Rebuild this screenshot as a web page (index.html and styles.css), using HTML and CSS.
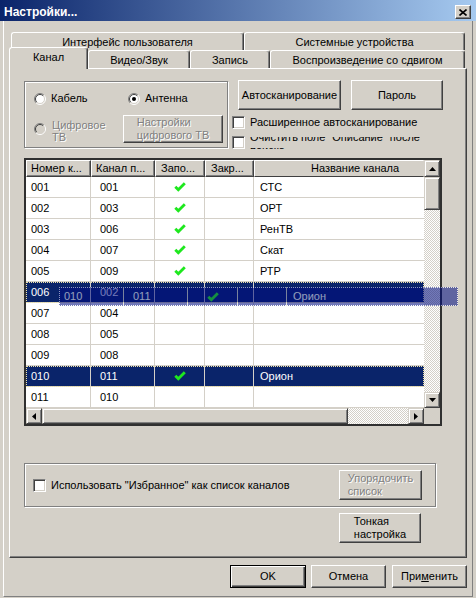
FILE: index.html
```html
<!DOCTYPE html>
<html lang="ru">
<head>
<meta charset="utf-8">
<title>Настройки...</title>
<link rel="stylesheet" href="styles.css">
</head>
<body>
<div class="window">
  <div class="titlebar">
    <span class="title">Настройки...</span>
    <span class="close"><svg width="8" height="7" viewBox="0 0 8 7"><path d="M0.5 0.5L7.5 6.5M7.5 0.5L0.5 6.5" stroke="#000" stroke-width="1.6" fill="none"/></svg></span>
  </div>
  <div class="client">
    <div class="tabrow back">
      <div class="tab w-ui">Интерфейс пользователя</div>
      <div class="tab w-sys">Системные устройства</div>
    </div>
    <div class="tabrow front">
      <div class="tab sel w-ch">Канал</div>
      <div class="tab w-av">Видео/Звук</div>
      <div class="tab w-rec">Запись</div>
      <div class="tab w-ts">Воспроизведение со сдвигом</div>
    </div>
    <div class="panel">
      <div class="top">
        <div class="grp1">
          <div class="rrow">
            <div class="radio r-first">
              <svg class="rc" width="12" height="12" viewBox="0 0 12 12"><circle cx="6" cy="6" r="5" fill="#fff"/><path d="M2.1 9.9A5.5 5.5 0 0 1 9.9 2.1" stroke="#808080" fill="none"/><path d="M9.9 2.1A5.5 5.5 0 0 1 2.1 9.9" stroke="#fff" fill="none"/><path d="M2.8 9.2A4.5 4.5 0 0 1 9.2 2.8" stroke="#404040" fill="none"/><path d="M9.2 2.8A4.5 4.5 0 0 1 2.8 9.2" stroke="#d4d0c8" fill="none"/></svg>
              <span class="rl">Кабель</span>
            </div>
            <div class="radio">
              <svg class="rc" width="12" height="12" viewBox="0 0 12 12"><circle cx="6" cy="6" r="5" fill="#fff"/><path d="M2.1 9.9A5.5 5.5 0 0 1 9.9 2.1" stroke="#808080" fill="none"/><path d="M9.9 2.1A5.5 5.5 0 0 1 2.1 9.9" stroke="#fff" fill="none"/><path d="M2.8 9.2A4.5 4.5 0 0 1 9.2 2.8" stroke="#404040" fill="none"/><path d="M9.2 2.8A4.5 4.5 0 0 1 2.8 9.2" stroke="#d4d0c8" fill="none"/><circle cx="6" cy="6" r="2" fill="#000"/></svg>
              <span class="rl">Антенна</span>
            </div>
          </div>
          <div class="rrow2">
            <div class="radio r-dig">
              <svg class="rc" width="12" height="12" viewBox="0 0 12 12"><circle cx="6" cy="6" r="5" fill="#d4d0c8"/><path d="M2.1 9.9A5.5 5.5 0 0 1 9.9 2.1" stroke="#808080" fill="none"/><path d="M9.9 2.1A5.5 5.5 0 0 1 2.1 9.9" stroke="#fff" fill="none"/><path d="M2.8 9.2A4.5 4.5 0 0 1 9.2 2.8" stroke="#404040" fill="none"/><path d="M9.2 2.8A4.5 4.5 0 0 1 2.8 9.2" stroke="#d4d0c8" fill="none"/></svg>
              <span class="rl dis two">Цифровое<br>ТВ</span>
            </div>
            <div class="btn b-dtv"><span class="ml dis">Настройки<br>цифрового ТВ</span></div>
          </div>
        </div>
        <div class="rcol">
          <div class="btnrow">
            <div class="btn b-auto">Автосканирование</div>
            <div class="btn b-pass">Пароль</div>
          </div>
          <div class="chkrow c1">
            <span class="chk"></span>
            <span class="cl">Расширенное автосканирование</span>
          </div>
          <div class="chkrow c2">
            <span class="chk"></span>
            <span class="cl clip"><span class="clipin">Очистить поле "Описание" после поиска</span></span>
          </div>
        </div>
      </div>

      <div class="lv">
        <div class="lv-main">
          <div class="hdr">
            <div class="hc k1">Номер к...</div>
            <div class="hc k2">Канал п...</div>
            <div class="hc k3">Запо...</div>
            <div class="hc k4">Закр...</div>
            <div class="hc k5">Название канала</div>
          </div>
          <div class="row"><div class="cell k1">001</div><div class="cell k2">001</div><div class="cell k3"><svg class="ok" width="12" height="10" viewBox="0 0 12 10"><path d="M1.3 4.8L4.3 7.8L10.8 1.3" stroke="#1ee81e" stroke-width="2.8" fill="none"/></svg></div><div class="cell k4"></div><div class="cell k5">СТС</div></div>
          <div class="row"><div class="cell k1">002</div><div class="cell k2">003</div><div class="cell k3"><svg class="ok" width="12" height="10" viewBox="0 0 12 10"><path d="M1.3 4.8L4.3 7.8L10.8 1.3" stroke="#1ee81e" stroke-width="2.8" fill="none"/></svg></div><div class="cell k4"></div><div class="cell k5">ОРТ</div></div>
          <div class="row"><div class="cell k1">003</div><div class="cell k2">006</div><div class="cell k3"><svg class="ok" width="12" height="10" viewBox="0 0 12 10"><path d="M1.3 4.8L4.3 7.8L10.8 1.3" stroke="#1ee81e" stroke-width="2.8" fill="none"/></svg></div><div class="cell k4"></div><div class="cell k5">РенТВ</div></div>
          <div class="row"><div class="cell k1">004</div><div class="cell k2">007</div><div class="cell k3"><svg class="ok" width="12" height="10" viewBox="0 0 12 10"><path d="M1.3 4.8L4.3 7.8L10.8 1.3" stroke="#1ee81e" stroke-width="2.8" fill="none"/></svg></div><div class="cell k4"></div><div class="cell k5">Скат</div></div>
          <div class="row"><div class="cell k1">005</div><div class="cell k2">009</div><div class="cell k3"><svg class="ok" width="12" height="10" viewBox="0 0 12 10"><path d="M1.3 4.8L4.3 7.8L10.8 1.3" stroke="#1ee81e" stroke-width="2.8" fill="none"/></svg></div><div class="cell k4"></div><div class="cell k5">РТР</div></div>
          <div class="row sel focus"><div class="cell k1">006</div><div class="cell k2">002</div><div class="cell k3"></div><div class="cell k4"></div><div class="cell k5"></div></div>
          <div class="row"><div class="cell k1">007</div><div class="cell k2">004</div><div class="cell k3"></div><div class="cell k4"></div><div class="cell k5"></div></div>
          <div class="row"><div class="cell k1">008</div><div class="cell k2">005</div><div class="cell k3"></div><div class="cell k4"></div><div class="cell k5"></div></div>
          <div class="row"><div class="cell k1">009</div><div class="cell k2">008</div><div class="cell k3"></div><div class="cell k4"></div><div class="cell k5"></div></div>
          <div class="row sel focus"><div class="cell k1">010</div><div class="cell k2">011</div><div class="cell k3"><svg class="ok" width="12" height="10" viewBox="0 0 12 10"><path d="M1.3 4.8L4.3 7.8L10.8 1.3" stroke="#1ee81e" stroke-width="2.8" fill="none"/></svg></div><div class="cell k4"></div><div class="cell k5">Орион</div></div>
          <div class="row"><div class="cell k1">011</div><div class="cell k2">010</div><div class="cell k3"></div><div class="cell k4"></div><div class="cell k5"></div></div>
        </div>
        <div class="vs">
          <div class="sb sb-up"><svg width="7" height="4" viewBox="0 0 7 4"><path d="M3.5 0L7 4H0Z" fill="#000"/></svg></div>
          <div class="sb thumb-v"></div>
          <div class="track"></div>
          <div class="sb"><svg width="7" height="4" viewBox="0 0 7 4"><path d="M0 0H7L3.5 4Z" fill="#000"/></svg></div>
        </div>
        <div class="hs">
          <div class="sb"><svg width="4" height="7" viewBox="0 0 4 7"><path d="M4 0V7L0 3.5Z" fill="#000"/></svg></div>
          <div class="sb thumb-h"></div>
          <div class="track"></div>
          <div class="sb"><svg width="4" height="7" viewBox="0 0 4 7"><path d="M0 0L4 3.5L0 7Z" fill="#000"/></svg></div>
        </div>
        <div class="corner"></div>

        <div class="drag">
          <div class="cell k1">010</div><div class="cell k2">011</div><div class="cell k3"><svg class="ok" width="12" height="10" viewBox="0 0 12 10"><path d="M1.3 4.8L4.3 7.8L10.8 1.3" stroke="#1ee81e" stroke-width="2.8" fill="none"/></svg></div><div class="cell k4"></div><div class="cell k5 dk5">Орион</div>
        </div>
      </div>

      <div class="grp2">
        <span class="chk"></span>
        <span class="cl">Использовать "Избранное" как список каналов</span>
        <div class="btn b-sort"><span class="ml dis">Упорядочить<br>список</span></div>
      </div>
      <div class="btn b-fine"><span class="ml">Тонкая<br>настройка</span></div>
    </div>

    <div class="bottom">
      <div class="btn b-ok">OK</div>
      <div class="btn b-cancel">Отмена</div>
      <div class="btn b-apply">При<u>м</u>енить</div>
    </div>
  </div>
</div>
</body>
</html>
```

FILE: styles.css
```css
* { box-sizing: border-box; }
html, body { margin: 0; padding: 0; }
body {
  width: 476px; height: 598px; overflow: hidden;
  background: #d4d0c8;
  font-family: "Liberation Sans", Arial, sans-serif;
  font-size: 11px; color: #000;
}
.window { width: 476px; height: 598px; background: #d4d0c8; display: flex; flex-direction: column; }

.titlebar {
  height: 21px; flex: none;
  background: linear-gradient(to right, #0a246a, #a6caf0);
  display: flex; align-items: center;
  padding: 3px 5px 0 4px;
}
.title { color: #fff; font-weight: bold; font-size: 12px; flex: 1; }
.close {
  width: 16px; height: 14px; background: #d4d0c8;
  border: 1px solid; border-color: #fff #404040 #404040 #fff;
  box-shadow: inset -1px -1px #808080;
  display: flex; align-items: center; justify-content: center;
}
.close svg { display: block; }

.client {
  flex: none; margin-left: 3px; width: 470px; height: 576px;
  border-left: 1px solid #fff; border-right: 1px solid #808080; border-bottom: 1px solid #808080;
  padding-top: 11px;
}

.tabrow { display: flex; align-items: flex-end; }
.tabrow.back { margin-left: 7px; height: 18px; }
.tabrow.front { margin-left: 5px; margin-top: -3px; height: 21px; position: relative; z-index: 1; }
.tab {
  height: 18px; background: #d4d0c8;
  border-top: 1px solid #fff; border-left: 1px solid #fff; border-right: 1px solid #404040;
  box-shadow: inset -1px 0 #808080;
  border-radius: 3px 3px 0 0;
  text-align: center; line-height: 16px; padding-top: 1px; white-space: nowrap;
}
.tab.sel { height: 22px; margin-bottom: -1px; }
.w-ui { width: 233px; }
.w-sys { width: 221px; }
.w-ch { width: 79px; }
.w-av { width: 102px; }
.w-rec { width: 80px; }
.w-ts { width: 195px; }

.panel {
  margin-left: 5px; width: 458px; height: 490px;
  border: 1px solid; border-color: #fff #404040 #404040 #fff;
  box-shadow: inset -1px -1px #808080;
  padding: 11px 0 0 14px;
}

.top { display: flex; height: 68px; }
.grp1 {
  margin-top: 1px; width: 204px; height: 67px;
  border: 1px solid #808080;
  box-shadow: inset 1px 1px #fff, 1px 1px #fff;
  padding: 10px 0 0 9px;
}
.rrow { display: flex; height: 13px; align-items: center; }
.radio { display: flex; align-items: center; }
.rc { flex: none; display: block; }
.rl { margin-left: 5px; line-height: 13px; }
.r-first { width: 94px; }
.rrow2 { display: flex; align-items: center; margin-top: 10px; }
.r-dig { width: 89px; }
.rl.two { line-height: 12px; margin-left: 6px; padding-top: 3px; }
.dis { color: #808080; text-shadow: 1px 1px 0 #fff; }

.btn {
  background: #d4d0c8;
  border: 1px solid; border-color: #fff #404040 #404040 #fff;
  box-shadow: inset -1px -1px #808080;
  display: flex; align-items: center; justify-content: center;
  line-height: 13px; white-space: nowrap;
}
.ml { display: block; text-align: left; }
.b-dtv { width: 100px; height: 28px; }

.rcol { margin-left: 4px; display: flex; flex-direction: column; }
.btnrow { display: flex; padding-left: 6px; gap: 10px; }
.b-auto { width: 103px; height: 30px; }
.b-pass { width: 92px; height: 30px; }
.chkrow { display: flex; align-items: center; height: 13px; }
.chkrow.c1 { margin-top: 6px; }
.chkrow.c2 { margin-top: 7px; }
.chk {
  flex: none; width: 13px; height: 13px; background: #fff;
  border: 1px solid; border-color: #808080 #fff #fff #808080;
  box-shadow: inset 1px 1px #404040, inset -1px -1px #d4d0c8;
}
.cl { margin-left: 5px; line-height: 13px; white-space: nowrap; }
.clip { height: 12px; overflow: hidden; width: 178px; white-space: normal; }
.clipin { display: block; margin-top: -6px; }

.lv {
  margin-top: 10px; width: 418px; height: 268px;
  border: 2px solid #303030;
  display: grid; grid-template-columns: 398px 16px; grid-template-rows: 248px 16px;
  background: #fff; position: relative;
}
.lv-main { overflow: hidden; background: #fff; }
.hdr { display: flex; height: 17px; }
.hc {
  flex: none; height: 17px; background: #d4d0c8;
  border: 1px solid; border-color: #fff #404040 #404040 #fff;
  box-shadow: inset -1px -1px #808080;
  line-height: 15px; white-space: nowrap; overflow: hidden;
}
.k1 { width: 65px; }
.k2 { width: 64px; }
.k3 { width: 50px; }
.k4 { width: 49px; }
.k5 { width: 170px; }
.hc.k1 { padding-left: 4px; }
.hc.k2 { padding-left: 4px; }
.hc.k3 { padding-left: 5px; }
.hc.k4 { padding-left: 5px; }
.hc.k5 { padding-left: 56px; border-right-color: #d4d0c8; box-shadow: none; }

.row { display: flex; height: 21px; }
.cell {
  flex: none; height: 21px;
  border-right: 1px solid #d4d0c8; border-bottom: 1px solid #d4d0c8;
  line-height: 20px; white-space: nowrap; overflow: hidden;
}
.cell.k1 { padding-left: 5px; }
.cell.k2 { padding-left: 9px; }
.cell.k3 { display: flex; align-items: center; justify-content: center; padding-left: 1px; }
.cell.k5 { padding-left: 6px; border-right: none; }
.ok { display: block; }
.row.sel .cell { background: #0a246a; color: #fff; }
.row.focus { outline: 1px dotted #efe3a8; outline-offset: -1px; }

.vs { display: flex; flex-direction: column; }
.hs { display: flex; }
.track {
  flex: 1;
  background: repeating-conic-gradient(#fff 0 25%, #d4d0c8 0 50%) 0 0 / 2px 2px;
}
.sb {
  flex: none; width: 16px; height: 16px; background: #d4d0c8;
  border: 1px solid; border-color: #d4d0c8 #404040 #404040 #d4d0c8;
  box-shadow: inset 1px 1px #fff, inset -1px -1px #808080;
  display: flex; align-items: center; justify-content: center;
}
.sb svg { display: block; }
.sb-up { height: 17px; }
.thumb-v { height: 33px; }
.thumb-h { width: 306px; }
.corner { background: #d4d0c8; }

.drag {
  position: absolute; left: 33px; top: 127px;
  width: 399px; height: 19px;
  display: flex; background: #000c80; color: #fff;
  opacity: 0.55;
  outline: 1px dotted #fff; outline-offset: -1px;
}
.drag .cell { height: 19px; line-height: 19px; border-bottom: none; }
.drag .dk5 { width: 171px; }

.grp2 {
  margin-top: 37px; width: 412px; height: 44px;
  border: 1px solid #808080;
  box-shadow: inset 1px 1px #fff, 1px 1px #fff;
  display: flex; align-items: center; padding-left: 8px;
}
.b-sort { width: 83px; height: 30px; margin-left: auto; margin-right: 13px; }
.b-fine { width: 82px; height: 30px; margin-top: 6px; margin-left: 315px; }

.bottom { display: flex; margin-top: 7px; padding-left: 226px; }
.b-ok {
  width: 76px; height: 23px;
  border: 1px solid #000;
  box-shadow: inset 1px 1px #fff, inset -1px -1px #404040, inset -2px -2px #808080;
  margin-right: 5px;
}
.b-cancel { width: 75px; height: 23px; margin-right: 6px; }
.b-apply { width: 75px; height: 23px; }
```
